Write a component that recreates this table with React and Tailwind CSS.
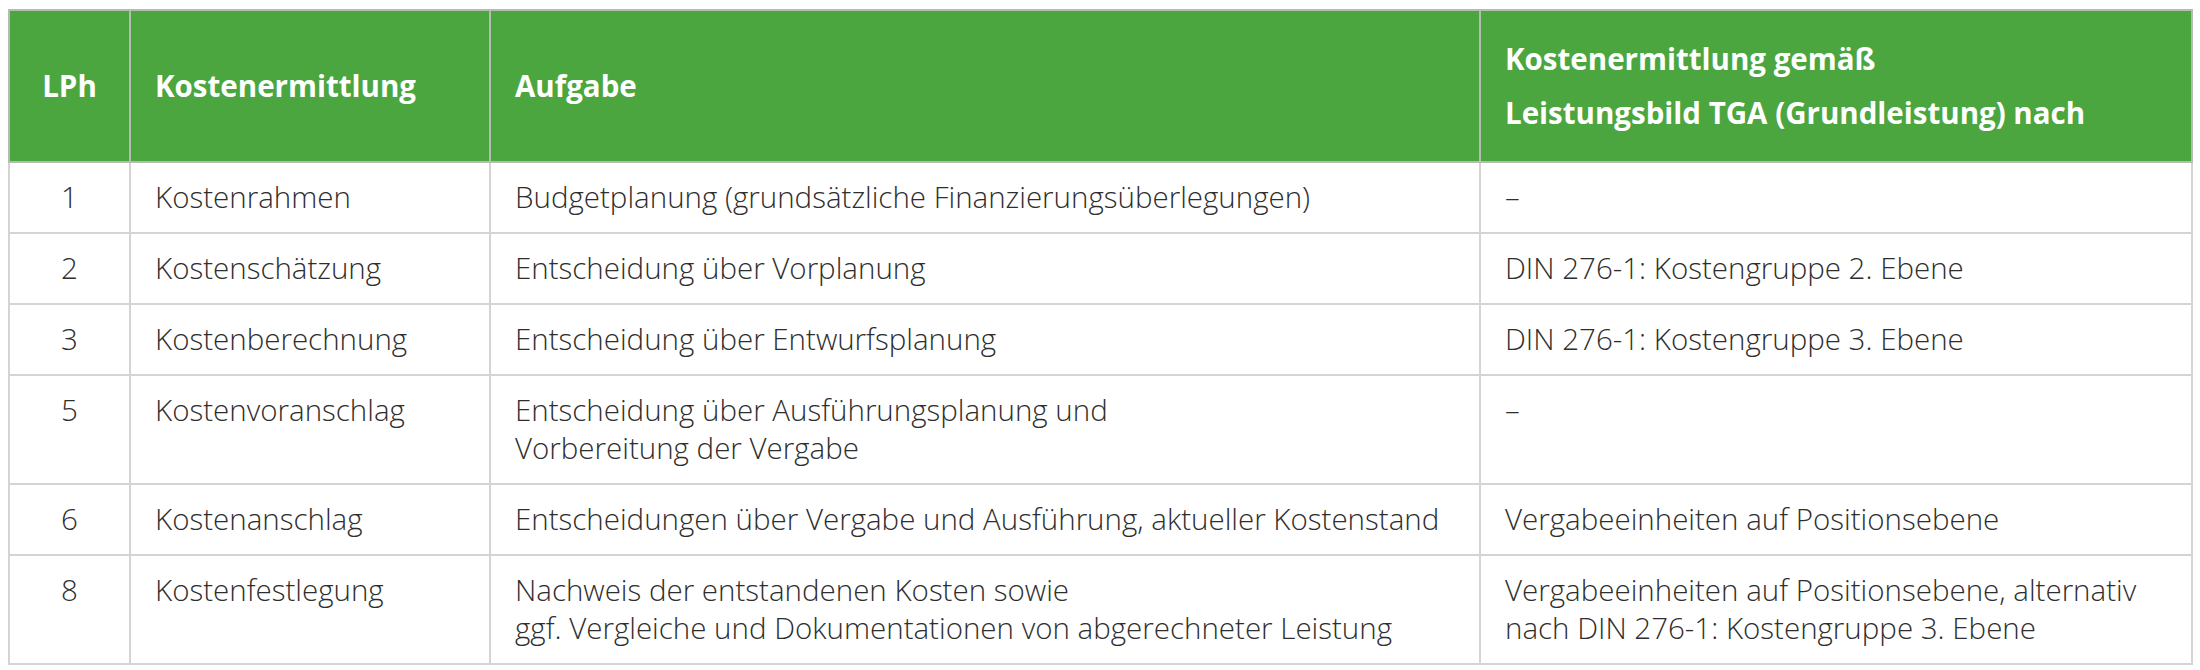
const rows = [
  {
    lph: "1",
    name: "Kostenrahmen",
    task: ["Budgetplanung (grundsätzliche Finanzierungsüberlegungen)"],
    tga: ["–"],
  },
  {
    lph: "2",
    name: "Kostenschätzung",
    task: ["Entscheidung über Vorplanung"],
    tga: ["DIN 276-1: Kostengruppe 2. Ebene"],
  },
  {
    lph: "3",
    name: "Kostenberechnung",
    task: ["Entscheidung über Entwurfsplanung"],
    tga: ["DIN 276-1: Kostengruppe 3. Ebene"],
  },
  {
    lph: "5",
    name: "Kostenvoranschlag",
    task: ["Entscheidung über Ausführungsplanung und", "Vorbereitung der Vergabe"],
    tga: ["–"],
  },
  {
    lph: "6",
    name: "Kostenanschlag",
    task: ["Entscheidungen über Vergabe und Ausführung, aktueller Kostenstand"],
    tga: ["Vergabeeinheiten auf Positionsebene"],
  },
  {
    lph: "8",
    name: "Kostenfestlegung",
    task: [
      "Nachweis der entstandenen Kosten sowie",
      "ggf. Vergleiche und Dokumentationen von abgerechneter Leistung",
    ],
    tga: [
      "Vergabeeinheiten auf Positionsebene, alternativ",
      "nach DIN 276-1: Kostengruppe 3. Ebene",
    ],
  },
];

const Lines = ({ lines }) =>
  lines.map((line, i) => (
    <span key={i} className="block">
      {line}
    </span>
  ));

export default function App() {
  return (
    <div className="min-h-screen bg-white pt-[9px] pl-[8px] font-['Open_Sans',sans-serif]">
      <table className="w-[2185px] table-fixed border-collapse border-2 border-[#d4d4d4]">
        <colgroup>
          <col className="w-[121px]" />
          <col className="w-[360px]" />
          <col className="w-[990px]" />
          <col />
        </colgroup>
        <thead>
          <tr className="h-[152px] bg-[#4ba63f] text-[29.5px] leading-[54px] font-semibold text-white">
            <th className="border-2 border-[#b5bdb2] px-2 text-center align-middle">
              LPh
            </th>
            <th className="border-2 border-[#b5bdb2] px-6 text-left align-middle">
              Kostenermittlung
            </th>
            <th className="border-2 border-[#b5bdb2] px-6 text-left align-middle">
              Aufgabe
            </th>
            <th className="border-2 border-[#b5bdb2] px-6 text-left align-middle">
              <span className="block">Kostenermittlung gemäß</span>
              <span className="block">Leistungsbild TGA (Grundleistung) nach</span>
            </th>
          </tr>
        </thead>
        <tbody className="text-[29.5px] leading-[38px] font-light text-[#2e2e2e]">
          {rows.map((row) => (
            <tr key={row.lph}>
              <td className="border-2 border-[#d4d4d4] px-2 pt-[15px] pb-[16px] text-center align-top">
                {row.lph}
              </td>
              <td className="border-2 border-[#d4d4d4] px-6 pt-[15px] pb-[16px] align-top">
                {row.name}
              </td>
              <td className="border-2 border-[#d4d4d4] px-6 pt-[15px] pb-[16px] align-top">
                <Lines lines={row.task} />
              </td>
              <td className="border-2 border-[#d4d4d4] px-6 pt-[15px] pb-[16px] align-top">
                <Lines lines={row.tga} />
              </td>
            </tr>
          ))}
        </tbody>
      </table>
    </div>
  );
}
